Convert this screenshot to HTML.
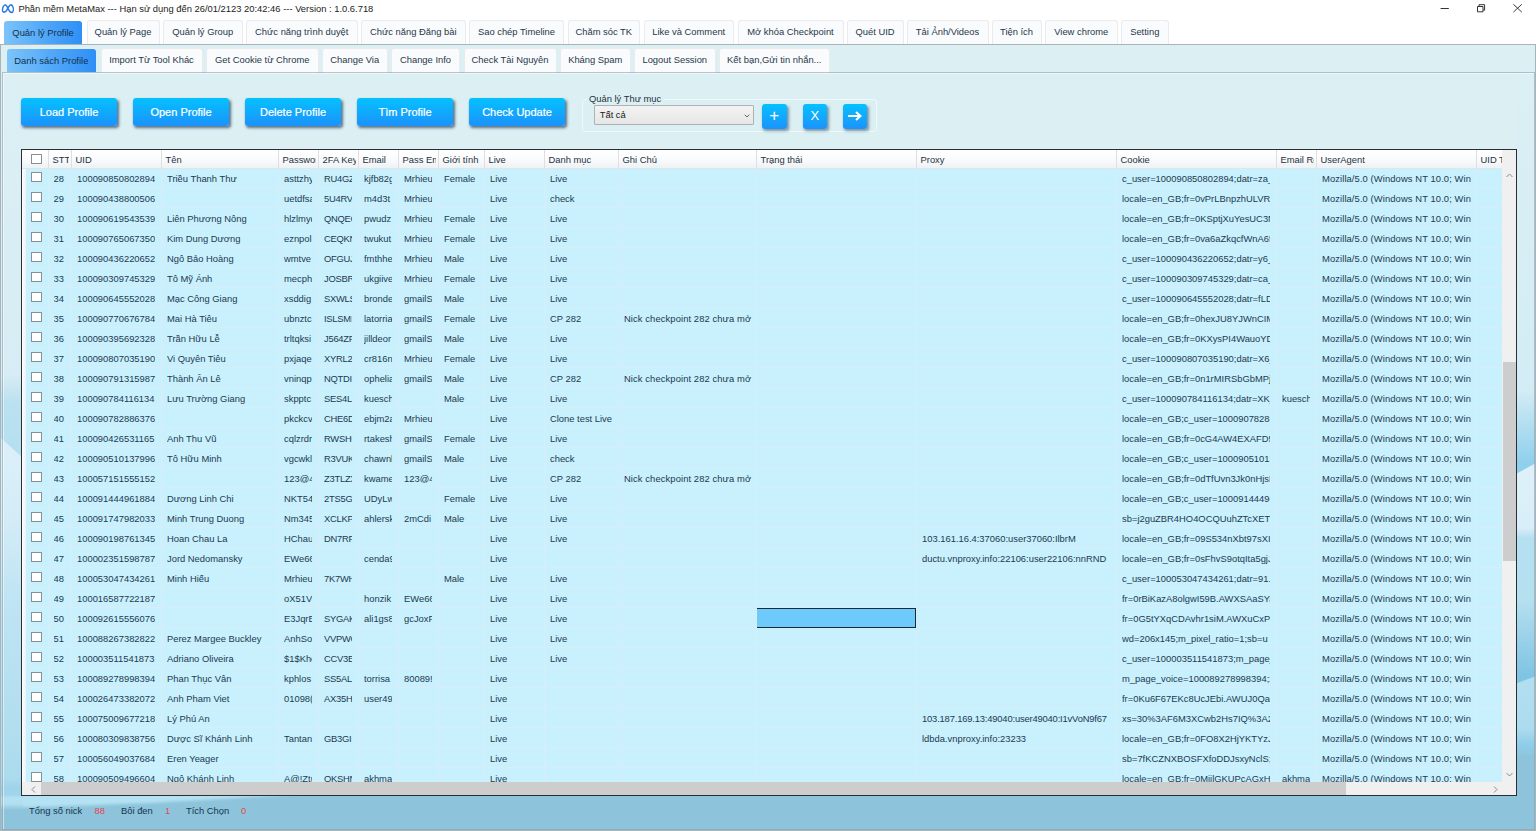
<!DOCTYPE html>
<html lang="vi"><head><meta charset="utf-8"><title>Phần mềm MetaMax</title>
<style>
html,body{margin:0;padding:0}
body{width:1536px;height:831px;overflow:hidden;background:#fff;position:relative;font-family:"Liberation Sans","DejaVu Sans",sans-serif;font-size:9.4px;color:#1b3346;-webkit-font-smoothing:antialiased}
div,span{box-sizing:border-box}
.abs{position:absolute}
.title{position:absolute;left:18.4px;top:2.4px;height:14px;line-height:14px;font-size:9.4px;color:#222;white-space:nowrap}
.tab{position:absolute;height:24.5px;line-height:21px;text-align:center;white-space:nowrap;border:1px solid #e9ebee;border-bottom:none;border-radius:3px 3px 0 0;background:#fafbfd;color:#26384a}
.tab.sel{border:none;line-height:23px;background:linear-gradient(90deg,#7cc4fa 0%,#4ea6f8 55%,#2f8ff6 100%);color:#14304c}
.outer{position:absolute;left:0;top:44px;width:1536px;height:787px;border:1px solid #a9b4b9;overflow:hidden}
.inner{position:absolute;left:2px;top:72px;width:1533px;height:757.5px;border:1px solid rgba(140,160,172,.6);box-shadow:inset 1px 1px 0 rgba(255,255,255,.5)}
.btn{position:absolute;top:97.5px;width:96px;height:28.5px;line-height:28px;text-align:center;color:#fff;font-size:11px;border-radius:3px;background:linear-gradient(180deg,#05c1ff 0%,#1b92fb 100%);box-shadow:1.5px 2px 3px rgba(30,60,85,.7);white-space:nowrap;-webkit-text-stroke:.2px #fff}
.sbtn{position:absolute;top:104px;width:24.5px;height:24.5px;line-height:24px;text-align:center;color:#fff;border-radius:3px;background:linear-gradient(180deg,#05c1ff 0%,#1b92fb 100%);box-shadow:1.5px 2px 3px rgba(40,70,90,.55)}
.grid{position:absolute;left:21px;top:149px;width:1496px;height:647px;border:1px solid #2b2f33;background:#c9f0fd;overflow:hidden}
.hdr{position:absolute;left:0;top:0;width:1481px;height:18.6px;background:linear-gradient(180deg,#ffffff 0%,#fbfcfd 45%,#eef2f5 100%);border-bottom:1px solid #dfe6ea}
.hc{position:absolute;top:0;height:18.6px;line-height:20.5px;padding-left:4px;white-space:nowrap;overflow:hidden;border-left:1px solid #dcdfe3;color:#26323c}
.row{position:absolute;left:0;width:1481px;height:20.0px;border-bottom:1px solid #d7eefa}
.c{position:absolute;top:0;height:20.0px;line-height:21.4px;white-space:nowrap;overflow:hidden;color:#1d3a50}
.vl{position:absolute;top:18px;width:1px;height:615px;background:#d7edf9}
.cb{position:absolute;left:9px;width:11.2px;height:10.1px;border:1px solid #878f95;background:#fff;border-radius:.5px}
.rh{position:absolute;left:0;top:18px;width:3.8px;height:615px;background:linear-gradient(90deg,#fdfdfe,#eaf3f9)}
.st{position:absolute;top:804px;height:14px;line-height:14px;white-space:nowrap;color:#17344b}
.red{color:#e64552}
</style></head><body>

<svg class="abs" style="left:1px;top:3px" width="14" height="11.400" viewBox="0 0 28 20" preserveAspectRatio="none"><path d="M5.500 16C2 16 2.500 10 4.500 6.500 6.500 3 9.500 2.500 11.500 5.500L16.500 13.500C18.500 16.500 21.500 17.500 23.500 15.500 25.500 13 25 8 22.500 4.800 20.500 2.500 17.800 3 15.800 6L10.500 14C9 16 7.500 16 5.500 16z" fill="none" stroke="#2b7be0" stroke-width="2.900" stroke-linejoin="round"/></svg>
<div class="title">Phần mềm MetaMax --- Hạn sử dụng đến 26/01/2123 20:42:46 --- Version : 1.0.6.718</div>
<svg class="abs" style="left:1436px;top:0" width="100" height="18" viewBox="0 0 100 18"><path d="M4.600 8.500h8.200" stroke="#333" stroke-width="1" fill="none"/><path d="M41.500 6.500h5.500v5.300h-5.500zM43 6.300V4.700h5.600v5.500h-1.400" stroke="#333" stroke-width="1" stroke-linejoin="round" fill="none"/><path d="M77.400 4.300l8.400 7.800M85.800 4.300l-8.400 7.800" stroke="#333" stroke-width="0.95" fill="none"/></svg>
<div class="tab sel" style="left:4px;top:20.500px;width:78.2px">Quản lý Profile</div>
<div class="tab" style="left:86.5px;top:20px;width:73px;height:25px">Quản lý Page</div>
<div class="tab" style="left:163px;top:20px;width:79.5px;height:25px">Quản lý Group</div>
<div class="tab" style="left:246px;top:20px;width:111.5px;height:25px">Chức năng trình duyệt</div>
<div class="tab" style="left:361px;top:20px;width:104.5px;height:25px">Chức năng Đăng bài</div>
<div class="tab" style="left:469px;top:20px;width:95px;height:25px">Sao chép Timeline</div>
<div class="tab" style="left:567.5px;top:20px;width:72.5px;height:25px">Chăm sóc TK</div>
<div class="tab" style="left:643.5px;top:20px;width:90.5px;height:25px">Like và Comment</div>
<div class="tab" style="left:737.5px;top:20px;width:106px;height:25px">Mở khóa Checkpoint</div>
<div class="tab" style="left:846.5px;top:20px;width:57px;height:25px">Quét UID</div>
<div class="tab" style="left:906.5px;top:20px;width:82px;height:25px">Tải Ảnh/Videos</div>
<div class="tab" style="left:991.5px;top:20px;width:50px;height:25px">Tiện ích</div>
<div class="tab" style="left:1045px;top:20px;width:72.5px;height:25px">View chrome</div>
<div class="tab" style="left:1121px;top:20px;width:47.5px;height:25px">Setting</div>
<div class="outer">
<svg class="abs" style="left:-1px;top:-45px" width="1536" height="831" viewBox="0 0 1536 831"><defs><linearGradient id="gl" gradientUnits="userSpaceOnUse" x1="0" y1="44" x2="0" y2="831"><stop offset="0.0000" stop-color="#dcf0f4"/><stop offset="0.4206" stop-color="#d7ecf4"/><stop offset="0.4549" stop-color="#bbe1f0"/><stop offset="0.5311" stop-color="#b3dff0"/><stop offset="0.5313" stop-color="#daeff9"/><stop offset="0.6048" stop-color="#d3ecf7"/><stop offset="0.7065" stop-color="#bfe4f3"/><stop offset="0.9327" stop-color="#acdbee"/><stop offset="0.9454" stop-color="#9fd3ea"/><stop offset="0.9543" stop-color="#a2d5eb"/><stop offset="0.9581" stop-color="#b5e2f2"/><stop offset="0.9657" stop-color="#b0dff0"/><stop offset="0.9733" stop-color="#8dc4dc"/><stop offset="1.0000" stop-color="#8dc4dc"/></linearGradient><linearGradient id="gr" gradientUnits="userSpaceOnUse" x1="0" y1="44" x2="0" y2="831"><stop offset="0.0000" stop-color="#dcf0f4"/><stop offset="0.4396" stop-color="#d3ecf5"/><stop offset="0.5324" stop-color="#8fd0ec"/><stop offset="0.5325" stop-color="#dff1f9"/><stop offset="0.6150" stop-color="#d8eef8"/><stop offset="0.6277" stop-color="#b5e0f2"/><stop offset="0.7065" stop-color="#b5e0f0"/><stop offset="0.8030" stop-color="#7fc4e3"/><stop offset="0.8032" stop-color="#b2dff0"/><stop offset="0.8691" stop-color="#addcef"/><stop offset="0.8907" stop-color="#8fcde8"/><stop offset="0.9060" stop-color="#8dc4dc"/><stop offset="1.0000" stop-color="#8dc4dc"/></linearGradient></defs><rect x="0" y="44" width="1536" height="787" fill="#dcf0f4"/><rect x="0" y="790" width="1536" height="41" fill="#8dc4dc"/><filter id="bl" x="-5%" y="-50%" width="110%" height="200%"><feGaussianBlur stdDeviation="1.6"/></filter><path d="M-10 790H340C250 798 140 805 -10 808z" fill="#b5e2f2" filter="url(#bl)"/><rect x="0" y="44" width="23" height="787" fill="url(#gl)"/><path d="M0 437L23 458V463H0z" fill="#daeff9"/><rect x="1515" y="44" width="21" height="787" fill="url(#gr)"/><path d="M1515 462.500H1536V463L1515 474.500z" fill="#8fd0ec"/><path d="M1515 675.500H1536V676L1515 684z" fill="#7fc4e3"/></svg>
</div>
<div class="tab sel" style="left:6.5px;top:48.800px;width:89.7px;height:23.700px">Danh sách Profile</div>
<div class="tab" style="left:100.5px;top:48px;width:102px;height:24.500px">Import Từ Tool Khác</div>
<div class="tab" style="left:206px;top:48px;width:112.5px;height:24.500px">Get Cookie từ Chrome</div>
<div class="tab" style="left:322px;top:48px;width:65.5px;height:24.500px">Change Via</div>
<div class="tab" style="left:391px;top:48px;width:69px;height:24.500px">Change Info</div>
<div class="tab" style="left:463.5px;top:48px;width:93px;height:24.500px">Check Tài Nguyên</div>
<div class="tab" style="left:560px;top:48px;width:70.5px;height:24.500px">Kháng Spam</div>
<div class="tab" style="left:634px;top:48px;width:81.5px;height:24.500px">Logout Session</div>
<div class="tab" style="left:719px;top:48px;width:110.5px;height:24.500px">Kết bạn,Gửi tin nhắn...</div>
<div class="inner"></div>
<div class="btn" style="left:21px">Load Profile</div>
<div class="btn" style="left:133px">Open Profile</div>
<div class="btn" style="left:245px">Delete Profile</div>
<div class="btn" style="left:357px">Tìm Profile</div>
<div class="btn" style="left:469px">Check Update</div>
<div class="abs" style="left:582px;top:99px;width:295px;height:33px;border:1px solid rgba(255,255,255,.55);border-radius:3px"></div>
<div class="abs" style="left:586px;top:92px;height:13px;line-height:13px;padding:0 3px;background:#dcf0f4;white-space:nowrap;color:#26323c">Quản lý Thư mục</div>
<div class="abs" style="left:593.700px;top:105.200px;width:160.700px;height:20.300px;border:1px solid #adb2b5;border-radius:1px;background:linear-gradient(180deg,#f3f3f3,#e6e6e6);line-height:17px;padding-left:5px;color:#222">Tất cả</div>
<svg class="abs" style="left:743.700px;top:113.500px" width="6" height="4" viewBox="0 0 6 4"><path d="M0.700 0.700l2.300 2.300 2.300-2.300" stroke="#555" stroke-width="0.900" fill="none"/></svg>
<div class="sbtn" style="left:762px;font-size:17px;line-height:24px">+</div>
<div class="sbtn" style="left:802.500px;font-size:13px">X</div>
<div class="sbtn" style="left:842.500px"><svg width="16" height="12" viewBox="0 0 16 12" style="position:absolute;left:4.500px;top:5.500px"><path d="M1 6h12M9 2l4.500 4L9 10" stroke="#fff" stroke-width="2" fill="none"/></svg></div>
<div class="grid">
<div class="row" style="top:18.40px">
<span class="cb" style="top:3.900px"></span>
<span class="c" style="left:31.5px;width:11px">28</span>
<span class="c" style="left:55px;width:77.5px">100090850802894</span>
<span class="c" style="left:145px;width:104.5px">Triều Thanh Thư</span>
<span class="c" style="left:262px;width:27.5px">asttzhyq</span>
<span class="c" style="left:302px;width:27.5px;letter-spacing:-.25px">RU4GZ</span>
<span class="c" style="left:342px;width:27.5px">kjfb82g</span>
<span class="c" style="left:382px;width:27.5px">Mrhieu</span>
<span class="c" style="left:422px;width:33.5px">Female</span>
<span class="c" style="left:468px;width:47.5px">Live</span>
<span class="c" style="left:528px;width:61.5px">Live</span>
<span class="c" style="left:1100px;width:147.5px">c_user=100090850802894;datr=za_k</span>
<span class="c" style="left:1300px;width:150.5px;letter-spacing:.1px">Mozilla/5.0 (Windows NT 10.0; Win</span>
</div>
<div class="row" style="top:38.40px">
<span class="cb" style="top:3.900px"></span>
<span class="c" style="left:31.5px;width:11px">29</span>
<span class="c" style="left:55px;width:77.5px">100090438800506</span>
<span class="c" style="left:262px;width:27.5px">uetdfsa</span>
<span class="c" style="left:302px;width:27.5px;letter-spacing:-.25px">5U4RV</span>
<span class="c" style="left:342px;width:27.5px">m4d3t</span>
<span class="c" style="left:382px;width:27.5px">Mrhieu</span>
<span class="c" style="left:468px;width:47.5px">Live</span>
<span class="c" style="left:528px;width:61.5px">check</span>
<span class="c" style="left:1100px;width:147.5px">locale=en_GB;fr=0vPrLBnpzhULVRX</span>
<span class="c" style="left:1300px;width:150.5px;letter-spacing:.1px">Mozilla/5.0 (Windows NT 10.0; Win</span>
</div>
<div class="row" style="top:58.40px">
<span class="cb" style="top:3.900px"></span>
<span class="c" style="left:31.5px;width:11px">30</span>
<span class="c" style="left:55px;width:77.5px">100090619543539</span>
<span class="c" style="left:145px;width:104.5px">Liên Phương Nông</span>
<span class="c" style="left:262px;width:27.5px">hlzlmyq</span>
<span class="c" style="left:302px;width:27.5px;letter-spacing:-.25px">QNQEG</span>
<span class="c" style="left:342px;width:27.5px">pwudz</span>
<span class="c" style="left:382px;width:27.5px">Mrhieu</span>
<span class="c" style="left:422px;width:33.5px">Female</span>
<span class="c" style="left:468px;width:47.5px">Live</span>
<span class="c" style="left:528px;width:61.5px">Live</span>
<span class="c" style="left:1100px;width:147.5px">locale=en_GB;fr=0KSptjXuYesUC3N</span>
<span class="c" style="left:1300px;width:150.5px;letter-spacing:.1px">Mozilla/5.0 (Windows NT 10.0; Win</span>
</div>
<div class="row" style="top:78.40px">
<span class="cb" style="top:3.900px"></span>
<span class="c" style="left:31.5px;width:11px">31</span>
<span class="c" style="left:55px;width:77.5px">100090765067350</span>
<span class="c" style="left:145px;width:104.5px">Kim Dung Dương</span>
<span class="c" style="left:262px;width:27.5px">eznpol</span>
<span class="c" style="left:302px;width:27.5px;letter-spacing:-.25px">CEQKN</span>
<span class="c" style="left:342px;width:27.5px">twukut</span>
<span class="c" style="left:382px;width:27.5px">Mrhieu</span>
<span class="c" style="left:422px;width:33.5px">Female</span>
<span class="c" style="left:468px;width:47.5px">Live</span>
<span class="c" style="left:528px;width:61.5px">Live</span>
<span class="c" style="left:1100px;width:147.5px">locale=en_GB;fr=0va6aZkqcfWnA6f</span>
<span class="c" style="left:1300px;width:150.5px;letter-spacing:.1px">Mozilla/5.0 (Windows NT 10.0; Win</span>
</div>
<div class="row" style="top:98.40px">
<span class="cb" style="top:3.900px"></span>
<span class="c" style="left:31.5px;width:11px">32</span>
<span class="c" style="left:55px;width:77.5px">100090436220652</span>
<span class="c" style="left:145px;width:104.5px">Ngô Bảo Hoàng</span>
<span class="c" style="left:262px;width:27.5px">wmtve</span>
<span class="c" style="left:302px;width:27.5px;letter-spacing:-.25px">OFGUJ</span>
<span class="c" style="left:342px;width:27.5px">fmthhe</span>
<span class="c" style="left:382px;width:27.5px">Mrhieu</span>
<span class="c" style="left:422px;width:33.5px">Male</span>
<span class="c" style="left:468px;width:47.5px">Live</span>
<span class="c" style="left:528px;width:61.5px">Live</span>
<span class="c" style="left:1100px;width:147.5px">c_user=100090436220652;datr=y6_k</span>
<span class="c" style="left:1300px;width:150.5px;letter-spacing:.1px">Mozilla/5.0 (Windows NT 10.0; Win</span>
</div>
<div class="row" style="top:118.40px">
<span class="cb" style="top:3.900px"></span>
<span class="c" style="left:31.5px;width:11px">33</span>
<span class="c" style="left:55px;width:77.5px">100090309745329</span>
<span class="c" style="left:145px;width:104.5px">Tô Mỹ Ánh</span>
<span class="c" style="left:262px;width:27.5px">mecph</span>
<span class="c" style="left:302px;width:27.5px;letter-spacing:-.25px">JOSBR</span>
<span class="c" style="left:342px;width:27.5px">ukgiive</span>
<span class="c" style="left:382px;width:27.5px">Mrhieu</span>
<span class="c" style="left:422px;width:33.5px">Female</span>
<span class="c" style="left:468px;width:47.5px">Live</span>
<span class="c" style="left:528px;width:61.5px">Live</span>
<span class="c" style="left:1100px;width:147.5px">c_user=100090309745329;datr=ca_k</span>
<span class="c" style="left:1300px;width:150.5px;letter-spacing:.1px">Mozilla/5.0 (Windows NT 10.0; Win</span>
</div>
<div class="row" style="top:138.40px">
<span class="cb" style="top:3.900px"></span>
<span class="c" style="left:31.5px;width:11px">34</span>
<span class="c" style="left:55px;width:77.5px">100090645552028</span>
<span class="c" style="left:145px;width:104.5px">Mạc Công Giang</span>
<span class="c" style="left:262px;width:27.5px">xsddig</span>
<span class="c" style="left:302px;width:27.5px;letter-spacing:-.25px">SXWLS</span>
<span class="c" style="left:342px;width:27.5px">bronde</span>
<span class="c" style="left:382px;width:27.5px">gmailS</span>
<span class="c" style="left:422px;width:33.5px">Male</span>
<span class="c" style="left:468px;width:47.5px">Live</span>
<span class="c" style="left:528px;width:61.5px">Live</span>
<span class="c" style="left:1100px;width:147.5px">c_user=100090645552028;datr=fLD</span>
<span class="c" style="left:1300px;width:150.5px;letter-spacing:.1px">Mozilla/5.0 (Windows NT 10.0; Win</span>
</div>
<div class="row" style="top:158.40px">
<span class="cb" style="top:3.900px"></span>
<span class="c" style="left:31.5px;width:11px">35</span>
<span class="c" style="left:55px;width:77.5px">100090770676784</span>
<span class="c" style="left:145px;width:104.5px">Mai Hà Tiêu</span>
<span class="c" style="left:262px;width:27.5px">ubnztc</span>
<span class="c" style="left:302px;width:27.5px;letter-spacing:-.25px">ISLSMI</span>
<span class="c" style="left:342px;width:27.5px">latorria</span>
<span class="c" style="left:382px;width:27.5px">gmailS</span>
<span class="c" style="left:422px;width:33.5px">Female</span>
<span class="c" style="left:468px;width:47.5px">Live</span>
<span class="c" style="left:528px;width:61.5px">CP 282</span>
<span class="c" style="left:602px;width:128.5px;letter-spacing:.1px">Nick checkpoint 282 chưa mở</span>
<span class="c" style="left:1100px;width:147.5px">locale=en_GB;fr=0hexJU8YJWnCIM</span>
<span class="c" style="left:1300px;width:150.5px;letter-spacing:.1px">Mozilla/5.0 (Windows NT 10.0; Win</span>
</div>
<div class="row" style="top:178.40px">
<span class="cb" style="top:3.900px"></span>
<span class="c" style="left:31.5px;width:11px">36</span>
<span class="c" style="left:55px;width:77.5px">100090395692328</span>
<span class="c" style="left:145px;width:104.5px">Trần Hữu Lễ</span>
<span class="c" style="left:262px;width:27.5px">trltqksi</span>
<span class="c" style="left:302px;width:27.5px;letter-spacing:-.25px">J564ZF</span>
<span class="c" style="left:342px;width:27.5px">jilldeor</span>
<span class="c" style="left:382px;width:27.5px">gmailS</span>
<span class="c" style="left:422px;width:33.5px">Male</span>
<span class="c" style="left:468px;width:47.5px">Live</span>
<span class="c" style="left:528px;width:61.5px">Live</span>
<span class="c" style="left:1100px;width:147.5px">locale=en_GB;fr=0KXysPI4WauoYD</span>
<span class="c" style="left:1300px;width:150.5px;letter-spacing:.1px">Mozilla/5.0 (Windows NT 10.0; Win</span>
</div>
<div class="row" style="top:198.40px">
<span class="cb" style="top:3.900px"></span>
<span class="c" style="left:31.5px;width:11px">37</span>
<span class="c" style="left:55px;width:77.5px">100090807035190</span>
<span class="c" style="left:145px;width:104.5px">Vi Quyên Tiêu</span>
<span class="c" style="left:262px;width:27.5px">pxjaqe</span>
<span class="c" style="left:302px;width:27.5px;letter-spacing:-.25px">XYRL2I</span>
<span class="c" style="left:342px;width:27.5px">cr816n</span>
<span class="c" style="left:382px;width:27.5px">Mrhieu</span>
<span class="c" style="left:422px;width:33.5px">Female</span>
<span class="c" style="left:468px;width:47.5px">Live</span>
<span class="c" style="left:528px;width:61.5px">Live</span>
<span class="c" style="left:1100px;width:147.5px">c_user=100090807035190;datr=X6_k</span>
<span class="c" style="left:1300px;width:150.5px;letter-spacing:.1px">Mozilla/5.0 (Windows NT 10.0; Win</span>
</div>
<div class="row" style="top:218.40px">
<span class="cb" style="top:3.900px"></span>
<span class="c" style="left:31.5px;width:11px">38</span>
<span class="c" style="left:55px;width:77.5px">100090791315987</span>
<span class="c" style="left:145px;width:104.5px">Thành Ân Lê</span>
<span class="c" style="left:262px;width:27.5px">vninqp</span>
<span class="c" style="left:302px;width:27.5px;letter-spacing:-.25px">NQTDI</span>
<span class="c" style="left:342px;width:27.5px">ophelia</span>
<span class="c" style="left:382px;width:27.5px">gmailS</span>
<span class="c" style="left:422px;width:33.5px">Male</span>
<span class="c" style="left:468px;width:47.5px">Live</span>
<span class="c" style="left:528px;width:61.5px">CP 282</span>
<span class="c" style="left:602px;width:128.5px;letter-spacing:.1px">Nick checkpoint 282 chưa mở</span>
<span class="c" style="left:1100px;width:147.5px">locale=en_GB;fr=0n1rMIRSbGbMPj</span>
<span class="c" style="left:1300px;width:150.5px;letter-spacing:.1px">Mozilla/5.0 (Windows NT 10.0; Win</span>
</div>
<div class="row" style="top:238.40px">
<span class="cb" style="top:3.900px"></span>
<span class="c" style="left:31.5px;width:11px">39</span>
<span class="c" style="left:55px;width:77.5px">100090784116134</span>
<span class="c" style="left:145px;width:104.5px">Lưu Trường Giang</span>
<span class="c" style="left:262px;width:27.5px">skpptc</span>
<span class="c" style="left:302px;width:27.5px;letter-spacing:-.25px">SES4L7</span>
<span class="c" style="left:342px;width:27.5px">kuesch</span>
<span class="c" style="left:422px;width:33.5px">Male</span>
<span class="c" style="left:468px;width:47.5px">Live</span>
<span class="c" style="left:528px;width:61.5px">Live</span>
<span class="c" style="left:1100px;width:147.5px">c_user=100090784116134;datr=XK_k</span>
<span class="c" style="left:1260px;width:27.5px">kuesch</span>
<span class="c" style="left:1300px;width:150.5px;letter-spacing:.1px">Mozilla/5.0 (Windows NT 10.0; Win</span>
</div>
<div class="row" style="top:258.40px">
<span class="cb" style="top:3.900px"></span>
<span class="c" style="left:31.5px;width:11px">40</span>
<span class="c" style="left:55px;width:77.5px">100090782886376</span>
<span class="c" style="left:262px;width:27.5px">pkckcv</span>
<span class="c" style="left:302px;width:27.5px;letter-spacing:-.25px">CHE6D</span>
<span class="c" style="left:342px;width:27.5px">ebjm2a</span>
<span class="c" style="left:382px;width:27.5px">Mrhieu</span>
<span class="c" style="left:468px;width:47.5px">Live</span>
<span class="c" style="left:528px;width:61.5px">Clone test Live</span>
<span class="c" style="left:1100px;width:147.5px">locale=en_GB;c_user=10009078288</span>
<span class="c" style="left:1300px;width:150.5px;letter-spacing:.1px">Mozilla/5.0 (Windows NT 10.0; Win</span>
</div>
<div class="row" style="top:278.40px">
<span class="cb" style="top:3.900px"></span>
<span class="c" style="left:31.5px;width:11px">41</span>
<span class="c" style="left:55px;width:77.5px">100090426531165</span>
<span class="c" style="left:145px;width:104.5px">Anh Thu Vũ</span>
<span class="c" style="left:262px;width:27.5px">cqlzrdr</span>
<span class="c" style="left:302px;width:27.5px;letter-spacing:-.25px">RWSHG</span>
<span class="c" style="left:342px;width:27.5px">rtakesh</span>
<span class="c" style="left:382px;width:27.5px">gmailS</span>
<span class="c" style="left:422px;width:33.5px">Female</span>
<span class="c" style="left:468px;width:47.5px">Live</span>
<span class="c" style="left:528px;width:61.5px">Live</span>
<span class="c" style="left:1100px;width:147.5px">locale=en_GB;fr=0cG4AW4EXAFD5.</span>
<span class="c" style="left:1300px;width:150.5px;letter-spacing:.1px">Mozilla/5.0 (Windows NT 10.0; Win</span>
</div>
<div class="row" style="top:298.40px">
<span class="cb" style="top:3.900px"></span>
<span class="c" style="left:31.5px;width:11px">42</span>
<span class="c" style="left:55px;width:77.5px">100090510137996</span>
<span class="c" style="left:145px;width:104.5px">Tô Hữu Minh</span>
<span class="c" style="left:262px;width:27.5px">vgcwkl</span>
<span class="c" style="left:302px;width:27.5px;letter-spacing:-.25px">R3VUK</span>
<span class="c" style="left:342px;width:27.5px">chawnl</span>
<span class="c" style="left:382px;width:27.5px">gmailS</span>
<span class="c" style="left:422px;width:33.5px">Male</span>
<span class="c" style="left:468px;width:47.5px">Live</span>
<span class="c" style="left:528px;width:61.5px">check</span>
<span class="c" style="left:1100px;width:147.5px">locale=en_GB;c_user=10009051013</span>
<span class="c" style="left:1300px;width:150.5px;letter-spacing:.1px">Mozilla/5.0 (Windows NT 10.0; Win</span>
</div>
<div class="row" style="top:318.40px">
<span class="cb" style="top:3.900px"></span>
<span class="c" style="left:31.5px;width:11px">43</span>
<span class="c" style="left:55px;width:77.5px">100057151555152</span>
<span class="c" style="left:262px;width:27.5px">123@4</span>
<span class="c" style="left:302px;width:27.5px;letter-spacing:-.25px">Z3TLZX</span>
<span class="c" style="left:342px;width:27.5px">kwame</span>
<span class="c" style="left:382px;width:27.5px">123@4</span>
<span class="c" style="left:468px;width:47.5px">Live</span>
<span class="c" style="left:528px;width:61.5px">CP 282</span>
<span class="c" style="left:602px;width:128.5px;letter-spacing:.1px">Nick checkpoint 282 chưa mở</span>
<span class="c" style="left:1100px;width:147.5px">locale=en_GB;fr=0dTfUvn3Jk0nHjsL</span>
<span class="c" style="left:1300px;width:150.5px;letter-spacing:.1px">Mozilla/5.0 (Windows NT 10.0; Win</span>
</div>
<div class="row" style="top:338.40px">
<span class="cb" style="top:3.900px"></span>
<span class="c" style="left:31.5px;width:11px">44</span>
<span class="c" style="left:55px;width:77.5px">100091444961884</span>
<span class="c" style="left:145px;width:104.5px">Dương Linh Chi</span>
<span class="c" style="left:262px;width:27.5px">NKT54</span>
<span class="c" style="left:302px;width:27.5px;letter-spacing:-.25px">2TS5GY</span>
<span class="c" style="left:342px;width:27.5px">UDyLw</span>
<span class="c" style="left:422px;width:33.5px">Female</span>
<span class="c" style="left:468px;width:47.5px">Live</span>
<span class="c" style="left:528px;width:61.5px">Live</span>
<span class="c" style="left:1100px;width:147.5px">locale=en_GB;c_user=10009144496</span>
<span class="c" style="left:1300px;width:150.5px;letter-spacing:.1px">Mozilla/5.0 (Windows NT 10.0; Win</span>
</div>
<div class="row" style="top:358.40px">
<span class="cb" style="top:3.900px"></span>
<span class="c" style="left:31.5px;width:11px">45</span>
<span class="c" style="left:55px;width:77.5px">100091747982033</span>
<span class="c" style="left:145px;width:104.5px">Minh Trung Duong</span>
<span class="c" style="left:262px;width:27.5px">Nm345</span>
<span class="c" style="left:302px;width:27.5px;letter-spacing:-.25px">XCLKPG</span>
<span class="c" style="left:342px;width:27.5px">ahlersk</span>
<span class="c" style="left:382px;width:27.5px">2mCdi</span>
<span class="c" style="left:422px;width:33.5px">Male</span>
<span class="c" style="left:468px;width:47.5px">Live</span>
<span class="c" style="left:528px;width:61.5px">Live</span>
<span class="c" style="left:1100px;width:147.5px">sb=j2guZBR4HO4OCQUuhZTcXET8</span>
<span class="c" style="left:1300px;width:150.5px;letter-spacing:.1px">Mozilla/5.0 (Windows NT 10.0; Win</span>
</div>
<div class="row" style="top:378.40px">
<span class="cb" style="top:3.900px"></span>
<span class="c" style="left:31.5px;width:11px">46</span>
<span class="c" style="left:55px;width:77.5px">100090198761345</span>
<span class="c" style="left:145px;width:104.5px">Hoan Chau La</span>
<span class="c" style="left:262px;width:27.5px">HChau</span>
<span class="c" style="left:302px;width:27.5px;letter-spacing:-.25px">DN7RF</span>
<span class="c" style="left:468px;width:47.5px">Live</span>
<span class="c" style="left:528px;width:61.5px">Live</span>
<span class="c" style="left:900px;width:187.5px">103.161.16.4:37060:user37060:IlbrM</span>
<span class="c" style="left:1100px;width:147.5px">locale=en_GB;fr=09S534nXbt97sXIk</span>
<span class="c" style="left:1300px;width:150.5px;letter-spacing:.1px">Mozilla/5.0 (Windows NT 10.0; Win</span>
</div>
<div class="row" style="top:398.40px">
<span class="cb" style="top:3.900px"></span>
<span class="c" style="left:31.5px;width:11px">47</span>
<span class="c" style="left:55px;width:77.5px">100002351598787</span>
<span class="c" style="left:145px;width:104.5px">Jord Nedomansky</span>
<span class="c" style="left:262px;width:27.5px">EWe66</span>
<span class="c" style="left:342px;width:27.5px">cenda9</span>
<span class="c" style="left:468px;width:47.5px">Live</span>
<span class="c" style="left:900px;width:187.5px">ductu.vnproxy.info:22106:user22106:nnRND</span>
<span class="c" style="left:1100px;width:147.5px">locale=en_GB;fr=0sFhvS9otqIta5gjJ</span>
<span class="c" style="left:1300px;width:150.5px;letter-spacing:.1px">Mozilla/5.0 (Windows NT 10.0; Win</span>
</div>
<div class="row" style="top:418.40px">
<span class="cb" style="top:3.900px"></span>
<span class="c" style="left:31.5px;width:11px">48</span>
<span class="c" style="left:55px;width:77.5px">100053047434261</span>
<span class="c" style="left:145px;width:104.5px">Minh Hiếu</span>
<span class="c" style="left:262px;width:27.5px">Mrhieu</span>
<span class="c" style="left:302px;width:27.5px;letter-spacing:-.25px">7K7WH</span>
<span class="c" style="left:422px;width:33.5px">Male</span>
<span class="c" style="left:468px;width:47.5px">Live</span>
<span class="c" style="left:528px;width:61.5px">Live</span>
<span class="c" style="left:1100px;width:147.5px">c_user=100053047434261;datr=91.</span>
<span class="c" style="left:1300px;width:150.5px;letter-spacing:.1px">Mozilla/5.0 (Windows NT 10.0; Win</span>
</div>
<div class="row" style="top:438.40px">
<span class="cb" style="top:3.900px"></span>
<span class="c" style="left:31.5px;width:11px">49</span>
<span class="c" style="left:55px;width:77.5px">100016587722187</span>
<span class="c" style="left:262px;width:27.5px">oX51V</span>
<span class="c" style="left:342px;width:27.5px">honzik</span>
<span class="c" style="left:382px;width:27.5px">EWe66</span>
<span class="c" style="left:468px;width:47.5px">Live</span>
<span class="c" style="left:528px;width:61.5px">Live</span>
<span class="c" style="left:1100px;width:147.5px">fr=0rBiKazA8olgwI59B.AWXSAaSYa</span>
<span class="c" style="left:1300px;width:150.5px;letter-spacing:.1px">Mozilla/5.0 (Windows NT 10.0; Win</span>
</div>
<div class="row" style="top:458.40px">
<span class="cb" style="top:3.900px"></span>
<span class="c" style="left:31.5px;width:11px">50</span>
<span class="c" style="left:55px;width:77.5px">100092615556076</span>
<span class="c" style="left:262px;width:27.5px">E3JqrB</span>
<span class="c" style="left:302px;width:27.5px;letter-spacing:-.25px">SYGAK</span>
<span class="c" style="left:342px;width:27.5px">ali1gs8</span>
<span class="c" style="left:382px;width:27.5px">gcJoxP</span>
<span class="c" style="left:468px;width:47.5px">Live</span>
<span class="c" style="left:528px;width:61.5px">Live</span>
<span class="c" style="left:1100px;width:147.5px">fr=0G5tYXqCDAvhr1siM.AWXuCxPg</span>
<span class="c" style="left:1300px;width:150.5px;letter-spacing:.1px">Mozilla/5.0 (Windows NT 10.0; Win</span>
<span class="abs" style="left:733.500px;top:-0.500px;width:160px;height:20.500px;background:#6ccbfb;border:1px solid #1e2a33"></span>
</div>
<div class="row" style="top:478.40px">
<span class="cb" style="top:3.900px"></span>
<span class="c" style="left:31.5px;width:11px">51</span>
<span class="c" style="left:55px;width:77.5px">100088267382822</span>
<span class="c" style="left:145px;width:104.5px">Perez Margee Buckley</span>
<span class="c" style="left:262px;width:27.5px">AnhSo</span>
<span class="c" style="left:302px;width:27.5px;letter-spacing:-.25px">VVPWG</span>
<span class="c" style="left:468px;width:47.5px">Live</span>
<span class="c" style="left:528px;width:61.5px">Live</span>
<span class="c" style="left:1100px;width:147.5px">wd=206x145;m_pixel_ratio=1;sb=u</span>
<span class="c" style="left:1300px;width:150.5px;letter-spacing:.1px">Mozilla/5.0 (Windows NT 10.0; Win</span>
</div>
<div class="row" style="top:498.40px">
<span class="cb" style="top:3.900px"></span>
<span class="c" style="left:31.5px;width:11px">52</span>
<span class="c" style="left:55px;width:77.5px">100003511541873</span>
<span class="c" style="left:145px;width:104.5px">Adriano Oliveira</span>
<span class="c" style="left:262px;width:27.5px">$1$Kho</span>
<span class="c" style="left:302px;width:27.5px;letter-spacing:-.25px">CCV3E</span>
<span class="c" style="left:468px;width:47.5px">Live</span>
<span class="c" style="left:528px;width:61.5px">Live</span>
<span class="c" style="left:1100px;width:147.5px">c_user=100003511541873;m_page_</span>
<span class="c" style="left:1300px;width:150.5px;letter-spacing:.1px">Mozilla/5.0 (Windows NT 10.0; Win</span>
</div>
<div class="row" style="top:518.40px">
<span class="cb" style="top:3.900px"></span>
<span class="c" style="left:31.5px;width:11px">53</span>
<span class="c" style="left:55px;width:77.5px">100089278998394</span>
<span class="c" style="left:145px;width:104.5px">Phan Thục Vân</span>
<span class="c" style="left:262px;width:27.5px">kphlos</span>
<span class="c" style="left:302px;width:27.5px;letter-spacing:-.25px">SS5AL.</span>
<span class="c" style="left:342px;width:27.5px">torrisa</span>
<span class="c" style="left:382px;width:27.5px">80089!</span>
<span class="c" style="left:468px;width:47.5px">Live</span>
<span class="c" style="left:1100px;width:147.5px">m_page_voice=100089278998394;x</span>
<span class="c" style="left:1300px;width:150.5px;letter-spacing:.1px">Mozilla/5.0 (Windows NT 10.0; Win</span>
</div>
<div class="row" style="top:538.40px">
<span class="cb" style="top:3.900px"></span>
<span class="c" style="left:31.5px;width:11px">54</span>
<span class="c" style="left:55px;width:77.5px">100026473382072</span>
<span class="c" style="left:145px;width:104.5px">Anh Pham Viet</span>
<span class="c" style="left:262px;width:27.5px">01098(</span>
<span class="c" style="left:302px;width:27.5px;letter-spacing:-.25px">AX35H</span>
<span class="c" style="left:342px;width:27.5px">user49</span>
<span class="c" style="left:468px;width:47.5px">Live</span>
<span class="c" style="left:1100px;width:147.5px">fr=0Ku6F67EKc8UcJEbi.AWUJ0QaN</span>
<span class="c" style="left:1300px;width:150.5px;letter-spacing:.1px">Mozilla/5.0 (Windows NT 10.0; Win</span>
</div>
<div class="row" style="top:558.40px">
<span class="cb" style="top:3.900px"></span>
<span class="c" style="left:31.5px;width:11px">55</span>
<span class="c" style="left:55px;width:77.5px">100075009677218</span>
<span class="c" style="left:145px;width:104.5px">Lý Phú An</span>
<span class="c" style="left:468px;width:47.5px">Live</span>
<span class="c" style="left:900px;width:187.5px;letter-spacing:-.17px">103.187.169.13:49040:user49040:I1vVoN9f67</span>
<span class="c" style="left:1100px;width:147.5px">xs=30%3AF6M3XCwb2Hs7IQ%3A2</span>
<span class="c" style="left:1300px;width:150.5px;letter-spacing:.1px">Mozilla/5.0 (Windows NT 10.0; Win</span>
</div>
<div class="row" style="top:578.40px">
<span class="cb" style="top:3.900px"></span>
<span class="c" style="left:31.5px;width:11px">56</span>
<span class="c" style="left:55px;width:77.5px">100080309838756</span>
<span class="c" style="left:145px;width:104.5px">Dược Sĩ Khánh Linh</span>
<span class="c" style="left:262px;width:27.5px">Tantan</span>
<span class="c" style="left:302px;width:27.5px;letter-spacing:-.25px">GB3GII</span>
<span class="c" style="left:468px;width:47.5px">Live</span>
<span class="c" style="left:900px;width:187.5px">ldbda.vnproxy.info:23233</span>
<span class="c" style="left:1100px;width:147.5px">locale=en_GB;fr=0FO8X2HjYKTYzJr</span>
<span class="c" style="left:1300px;width:150.5px;letter-spacing:.1px">Mozilla/5.0 (Windows NT 10.0; Win</span>
</div>
<div class="row" style="top:598.40px">
<span class="cb" style="top:3.900px"></span>
<span class="c" style="left:31.5px;width:11px">57</span>
<span class="c" style="left:55px;width:77.5px">100056049037684</span>
<span class="c" style="left:145px;width:104.5px">Eren Yeager</span>
<span class="c" style="left:468px;width:47.5px">Live</span>
<span class="c" style="left:1100px;width:147.5px">sb=7fKCZNXBOSFXfoDDJsxyNclS;d</span>
<span class="c" style="left:1300px;width:150.5px;letter-spacing:.1px">Mozilla/5.0 (Windows NT 10.0; Win</span>
</div>
<div class="row" style="top:618.40px">
<span class="cb" style="top:3.900px"></span>
<span class="c" style="left:31.5px;width:11px">58</span>
<span class="c" style="left:55px;width:77.5px">100090509496604</span>
<span class="c" style="left:145px;width:104.5px">Ngô Khánh Linh</span>
<span class="c" style="left:262px;width:27.5px">A@!Ztu</span>
<span class="c" style="left:302px;width:27.5px;letter-spacing:-.25px">OKSHN</span>
<span class="c" style="left:342px;width:27.5px">akhma</span>
<span class="c" style="left:468px;width:47.5px">Live</span>
<span class="c" style="left:1100px;width:147.5px">locale=en_GB;fr=0MiilGKUPcAGxHY</span>
<span class="c" style="left:1260px;width:27.5px">akhma</span>
<span class="c" style="left:1300px;width:150.5px;letter-spacing:.1px">Mozilla/5.0 (Windows NT 10.0; Win</span>
</div>
<div class="vl" style="left:25.5px"></div>
<div class="vl" style="left:48.5px"></div>
<div class="vl" style="left:138.5px"></div>
<div class="vl" style="left:255.5px"></div>
<div class="vl" style="left:295.5px"></div>
<div class="vl" style="left:335.5px"></div>
<div class="vl" style="left:375.5px"></div>
<div class="vl" style="left:415.5px"></div>
<div class="vl" style="left:461.5px"></div>
<div class="vl" style="left:521.5px"></div>
<div class="vl" style="left:595.5px"></div>
<div class="vl" style="left:733.5px"></div>
<div class="vl" style="left:893.5px"></div>
<div class="vl" style="left:1093.5px"></div>
<div class="vl" style="left:1253.5px"></div>
<div class="vl" style="left:1293.5px"></div>
<div class="vl" style="left:1453.5px"></div>
<div class="rh"></div>
<div class="hdr">
<span class="cb" style="top:3.700px"></span>
<span class="hc" style="left:25.5px;width:21.5px">STT</span>
<span class="hc" style="left:48.5px;width:88.5px">UID</span>
<span class="hc" style="left:138.5px;width:115.5px">Tên</span>
<span class="hc" style="left:255.5px;width:38.5px">Password</span>
<span class="hc" style="left:295.5px;width:38.5px">2FA Key</span>
<span class="hc" style="left:335.5px;width:38.5px">Email</span>
<span class="hc" style="left:375.5px;width:38.5px">Pass Email</span>
<span class="hc" style="left:415.5px;width:44.5px">Giới tính</span>
<span class="hc" style="left:461.5px;width:58.5px">Live</span>
<span class="hc" style="left:521.5px;width:72.5px">Danh mục</span>
<span class="hc" style="left:595.5px;width:136.5px">Ghi Chú</span>
<span class="hc" style="left:733.5px;width:158.5px">Trạng thái</span>
<span class="hc" style="left:893.5px;width:198.5px">Proxy</span>
<span class="hc" style="left:1093.5px;width:158.5px">Cookie</span>
<span class="hc" style="left:1253.5px;width:38.5px">Email Recovery</span>
<span class="hc" style="left:1293.5px;width:158.5px">UserAgent</span>
<span class="hc" style="left:1453.5px;width:27px">UID Token</span>
</div>
<div class="abs" style="left:1480.300px;top:0;width:14.700px;height:645px;background:#f0f0f0"></div>
<div class="abs" style="left:1480.800px;top:211.700px;width:14.200px;height:199.300px;background:#cdcdcd"></div>
<svg class="abs" style="left:1483.600px;top:23.300px" width="7" height="5" viewBox="0 0 7 5"><path d="M0.500 4l3-3 3 3" stroke="#8a8a8a" stroke-width="1" fill="none"/></svg>
<svg class="abs" style="left:1483.600px;top:622.200px" width="7" height="5" viewBox="0 0 7 5"><path d="M0.500 1l3 3 3-3" stroke="#8a8a8a" stroke-width="1" fill="none"/></svg>
<div class="abs" style="left:0;top:632px;width:1495px;height:13.500px;background:#f0f0f0"></div>
<div class="abs" style="left:18.500px;top:632px;width:1305px;height:13.500px;background:#cdcdcd"></div>
<svg class="abs" style="left:9px;top:635.500px" width="5" height="7" viewBox="0 0 5 7"><path d="M4 0.500L1 3.500 4 6.500" stroke="#8a8a8a" stroke-width="1" fill="none"/></svg>
<svg class="abs" style="left:1471px;top:635.500px" width="5" height="7" viewBox="0 0 5 7"><path d="M1 0.500L4 3.500 1 6.500" stroke="#8a8a8a" stroke-width="1" fill="none"/></svg>
</div>
<div class="st" style="left:29px">Tổng số nick</div><div class="st red" style="left:94.500px">88</div>
<div class="st" style="left:121px">Bôi đen</div><div class="st red" style="left:165px">1</div>
<div class="st" style="left:186px">Tích Chọn</div><div class="st red" style="left:241px">0</div>
</body></html>
